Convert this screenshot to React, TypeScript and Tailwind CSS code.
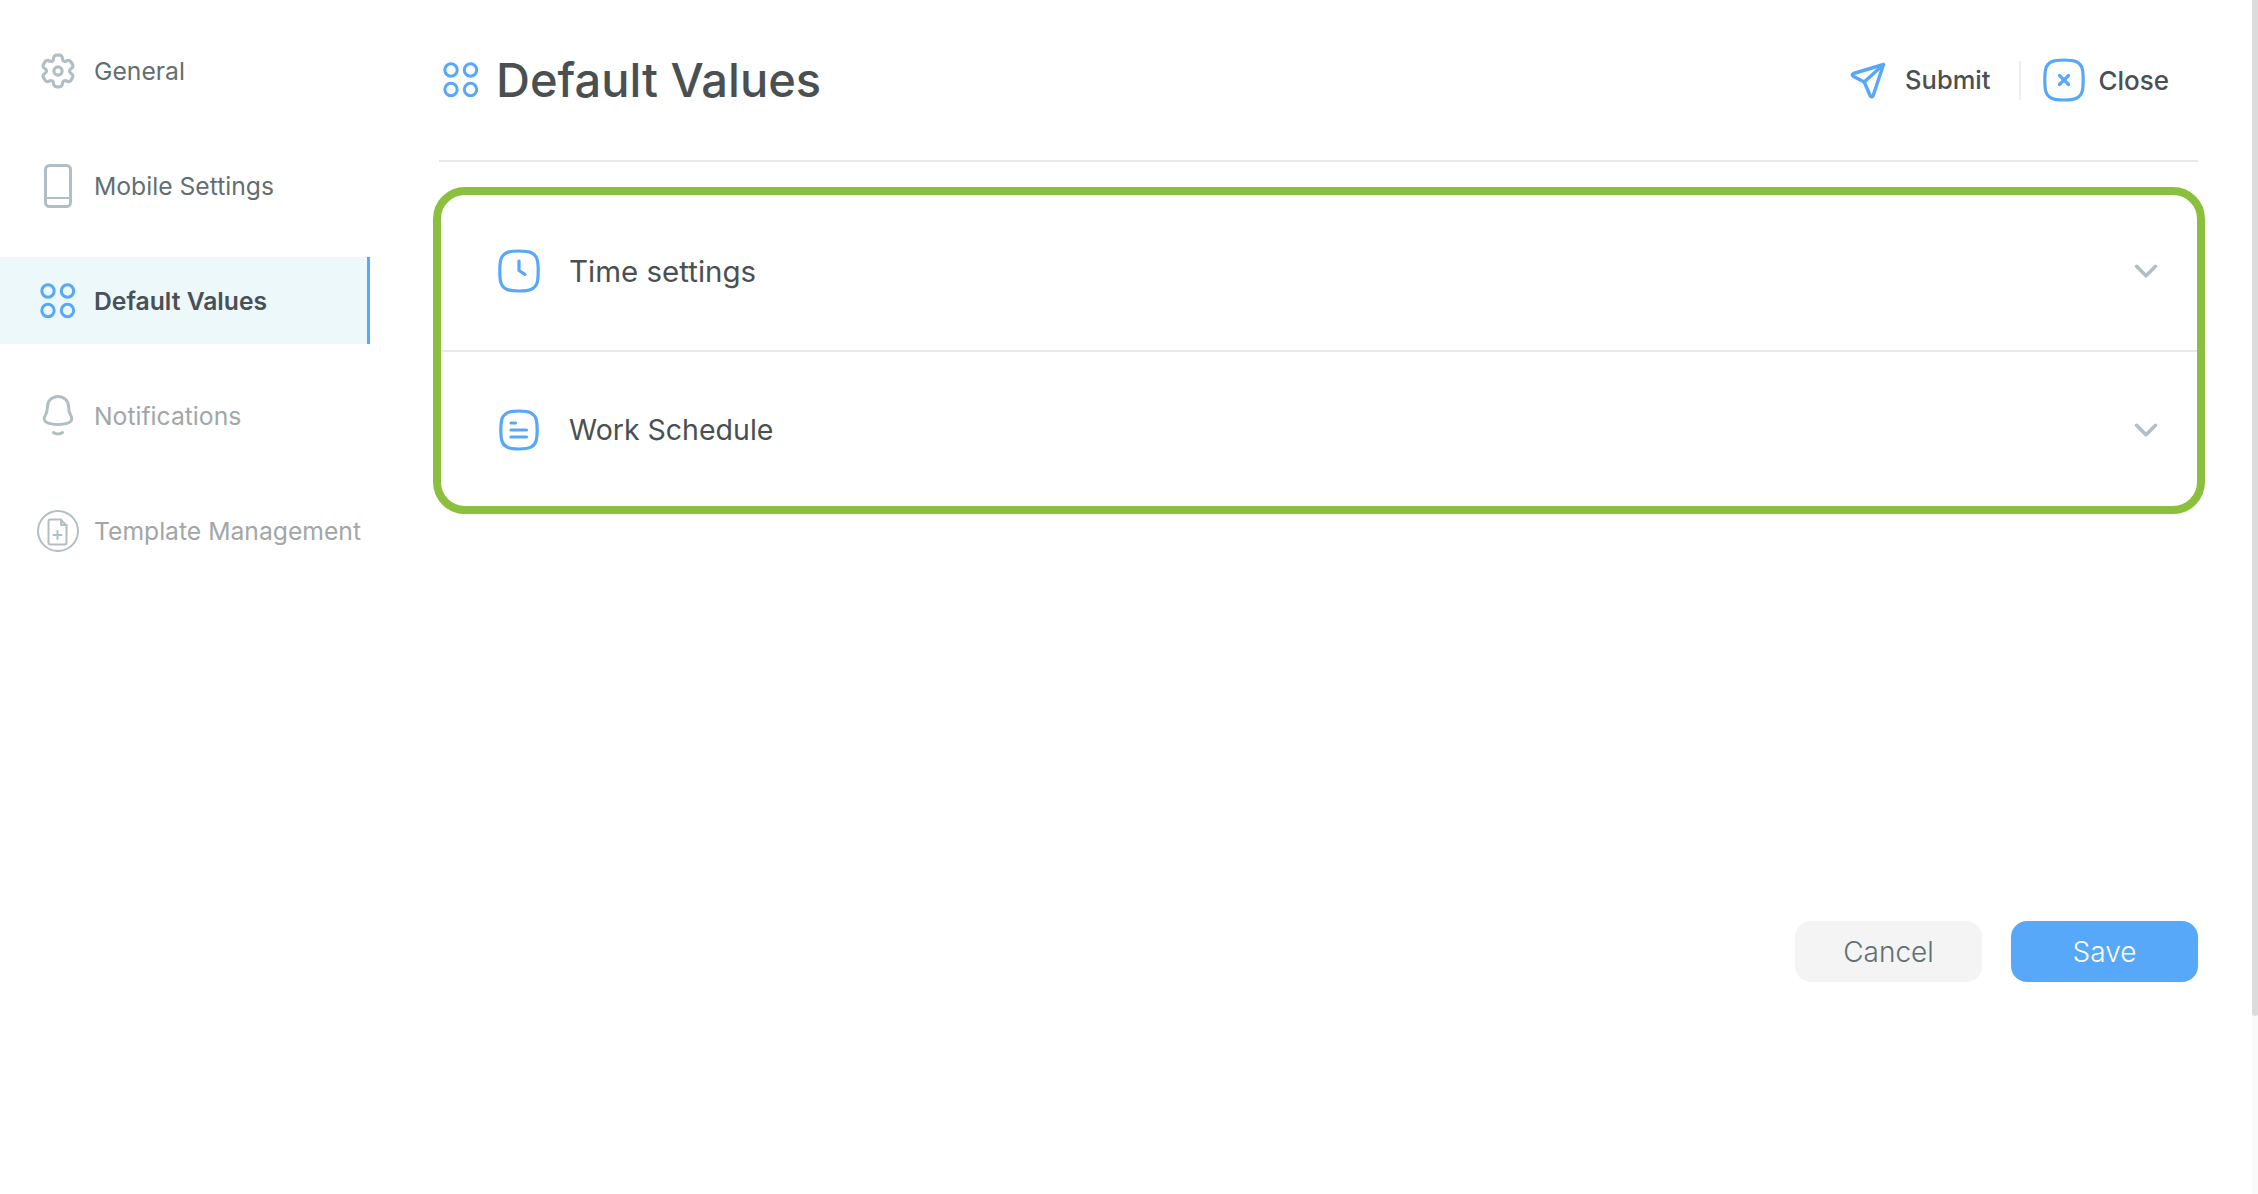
import { FC, ReactNode } from "react";
import { ChevronDown } from "lucide-react";

const fontStack = { fontFamily: "Inter, 'Noto Sans', sans-serif" };

const DotsIcon: FC<{ className?: string }> = ({ className }) => (
  <svg viewBox="0 0 36 36" fill="none" stroke="#58a8f9" strokeWidth="3" className={className}>
    <circle cx="8" cy="8" r="6.200" />
    <circle cx="27.500" cy="8" r="6.200" />
    <circle cx="8" cy="27.500" r="6.200" />
    <circle cx="27.500" cy="27.500" r="6.200" />
  </svg>
);

const GearIcon: FC = () => (
  <svg viewBox="0 0 24 24" fill="none" stroke="#b2bec3" strokeWidth="2" className="h-[38px] w-[38px] rotate-90">
    <circle cx="12" cy="12" r="2.600" />
    <path d="M2 12.880v-1.760c0-1.040.85-1.900 1.900-1.900 1.810 0 2.550-1.280 1.640-2.850-.52-.9-.21-2.070.7-2.590l1.730-.99c.79-.47 1.810-.19 2.280.6l.11.19c.9 1.570 2.380 1.570 3.290 0l.11-.19c.47-.79 1.490-1.070 2.280-.6l1.730.99c.91.52 1.220 1.690.7 2.590-.91 1.570-.17 2.850 1.640 2.850 1.040 0 1.900.85 1.900 1.900v1.760c0 1.040-.85 1.900-1.900 1.900-1.810 0-2.550 1.280-1.640 2.850.52.91.21 2.070-.7 2.590l-1.730.99c-.79.47-1.810.19-2.280-.6l-.11-.19c-.9-1.570-2.380-1.570-3.290 0l-.11.19c-.47.79-1.490 1.070-2.280.6l-1.730-.99a1.899 1.899 0 01-.7-2.590c.91-1.570.17-2.850-1.640-2.850-1.050 0-1.900-.86-1.900-1.900z" />
  </svg>
);

const MobileIcon: FC = () => (
  <svg viewBox="0 0 28 44" fill="none" stroke="#b2bec3" strokeWidth="3" className="h-[44px] w-[28px]">
    <rect x="1.500" y="1.500" width="25" height="41" rx="4" />
    <path d="M1.500 34h25" strokeWidth="2" />
  </svg>
);

const BellIcon: FC = () => (
  <svg viewBox="0 0 32 42" fill="none" stroke="#b2bec3" strokeWidth="3" strokeLinecap="round" strokeLinejoin="round" className="h-[42px] w-[32px]">
    <path d="M16 1.500c-6.400 0-10.600 4.600-10.600 10.600 0 3.600-.4 6-2.200 8.600-1.600 2.400-1.400 5.400 1.600 6.800 3 1.400 7 1.900 11.200 1.900s8.200-.5 11.200-1.900c3-1.400 3.200-4.400 1.600-6.800-1.800-2.600-2.200-5-2.200-8.600C26.600 6.100 22.400 1.500 16 1.500z" />
    <path d="M11.500 37.500c2.500 2 6.500 2 9 0" />
  </svg>
);

const TemplateIcon: FC = () => (
  <svg viewBox="0 0 42 42" fill="none" stroke="#b2bec3" strokeWidth="2" strokeLinecap="round" strokeLinejoin="round" className="h-[42px] w-[42px]">
    <circle cx="21" cy="21" r="20" />
    <path d="M11.500 11.500c0-1.100.9-2 2-2h10l6 6v17c0 1.100-.9 2-2 2h-14c-1.100 0-2-.9-2-2z" />
    <path d="M24 9.500V15h5.500" />
    <path d="M20.500 21v8M16.500 25h8" />
  </svg>
);

const SendIcon: FC = () => (
  <svg viewBox="0 0 36 37" fill="none" stroke="#58a8f9" strokeWidth="3.400" strokeLinecap="round" strokeLinejoin="round" className="h-[37px] w-[36px]">
    <path d="M33.500 2.500 3.500 11.500c-1.500.5-1.700 2-.3 2.800l11 5.700 6 13.800c.7 1.500 2.300 1.500 2.900-.1z" />
    <path d="M14.200 20 33.500 2.500" />
  </svg>
);

const Squircle: FC<{ children: ReactNode }> = ({ children }) => (
  <svg viewBox="0 0 44 44" fill="none" stroke="#58a8f9" strokeWidth="3.200" strokeLinecap="round" strokeLinejoin="round" className="h-[44px] w-[44px]">
    <path d="M22 2c-4.800 0-9.200.2-12.400 1.800C6.500 5.300 4.600 7.600 3.800 10.600 3 13.600 2.800 17 2.800 22s.2 8.400 1 11.400c.8 3 2.700 5.300 5.800 6.800 3.200 1.600 7.600 1.800 12.400 1.800s9.200-.2 12.400-1.800c3.100-1.500 5-3.800 5.800-6.800.8-3 1-6.400 1-11.400s-.2-8.400-1-11.400c-.8-3-2.700-5.300-5.800-6.800C31.200 2.200 26.800 2 22 2z" />
    {children}
  </svg>
);

const ScheduleIcon: FC = () => (
  <svg viewBox="0 0 40 42" fill="none" stroke="#58a8f9" strokeWidth="3.200" strokeLinecap="round" className="h-[42px] w-[40px]">
    <path d="M20 2c-4.500 0-8.700.2-11.800 1.800C5.300 5.300 3.600 7.500 2.800 10.500 2 13.500 1.800 16.500 1.800 21s.2 7.500 1 10.500c.8 3 2.500 5.200 5.400 6.700C11.300 39.800 15.500 40 20 40s8.700-.2 11.800-1.800c2.900-1.500 4.600-3.700 5.400-6.700.8-3 1-6 1-10.500s-.2-7.500-1-10.500c-.8-3-2.500-5.200-5.400-6.700C28.700 2.200 24.500 2 20 2z" />
    <path d="M12 14h4.500M12 21h15.500M12 28h15.500" />
  </svg>
);

type MenuItem = { label: string; icon: ReactNode; tone: string; active?: boolean };

const menu: MenuItem[] = [
  { label: "General", icon: <GearIcon />, tone: "text-[#636e72]" },
  { label: "Mobile Settings", icon: <MobileIcon />, tone: "text-[#636e72]" },
  { label: "Default Values", icon: <DotsIcon className="h-[36px] w-[36px]" />, tone: "text-[#495057] font-semibold", active: true },
  { label: "Notifications", icon: <BellIcon />, tone: "text-[#a2a6a8]" },
  { label: "Template Management", icon: <TemplateIcon />, tone: "text-[#a2a6a8]" },
];

const App: FC = () => {
  return (
    <div className="flex h-screen w-full overflow-hidden bg-white" style={fontStack}>
      <aside className="flex w-[370px] shrink-0 flex-col gap-[28px] pt-[27px]">
        {menu.map((item) => (
          <div
            key={item.label}
            className={`flex h-[87px] items-center ${item.active ? "border-r-[3px] border-[#58a8f9] bg-[#ecf8f9]" : ""}`}
          >
            <div className="ml-[37px] mr-[15px] flex w-[42px] shrink-0 justify-center">{item.icon}</div>
            <span className={`whitespace-nowrap pt-[2px] text-[24.700px] ${item.tone}`}>{item.label}</span>
          </div>
        ))}
      </aside>

      <main className="flex flex-1 flex-col pl-[69px] pr-[54px]">
        <header className="flex h-[162px] shrink-0 items-center border-b-2 border-[#e6e8ea]">
          <DotsIcon className="ml-[4px] h-[36px] w-[36px]" />
          <h1 className="ml-[17px] text-[47px] font-medium text-[#4a5052]">Default Values</h1>
          <div className="ml-auto flex items-center pr-[29px]">
            <SendIcon />
            <span className="ml-[19px] text-[25.500px] font-medium text-[#4a5052]">Submit</span>
            <div className="ml-[29px] mr-[21px] h-[39px] w-[2px] bg-[#eceeef]" />
            <Squircle>
              <path d="M17.500 17.500l9 9M26.500 17.500l-9 9" />
            </Squircle>
            <span className="ml-[12px] text-[26px] font-medium text-[#4a5052]">Close</span>
          </div>
        </header>

        <section className="-ml-[6px] -mr-[7px] mt-[25px] rounded-[32px] border-[8px] border-[#8bc03e]">
          <div className="flex h-[157px] items-center border-b-2 border-[#e6e8ea] pb-[3px] pl-[56px] pr-[32px]">
            <Squircle>
              <path d="M22 12v9.500l6 4" />
            </Squircle>
            <span className="ml-[28px] text-[29.500px] text-[#4a5052]">Time settings</span>
            <ChevronDown className="ml-auto h-[38px] w-[38px] text-[#b2bec3]" strokeWidth={2.2} />
          </div>
          <div className="flex h-[154px] items-center pl-[58px] pr-[32px] pt-[2px]">
            <ScheduleIcon />
            <span className="ml-[30px] text-[28.500px] text-[#4a5052]">Work Schedule</span>
            <ChevronDown className="ml-auto h-[38px] w-[38px] text-[#b2bec3]" strokeWidth={2.2} />
          </div>
        </section>

        <footer className="mt-[407px] flex justify-end gap-[29px]">
          <button className="h-[61px] w-[187px] rounded-[16px] bg-[#f4f4f4] text-[28px] font-light text-[#636e72]">
            Cancel
          </button>
          <button className="h-[61px] w-[187px] rounded-[16px] bg-[#58a8f9] text-[28px] font-light text-white">
            Save
          </button>
        </footer>
      </main>

      <div className="flex w-[6px] shrink-0 flex-col bg-[#fafafa]">
        <div className="h-[1016px] rounded-b-[4px] bg-[#dcdcdc]" />
      </div>
    </div>
  );
};

export default App;
